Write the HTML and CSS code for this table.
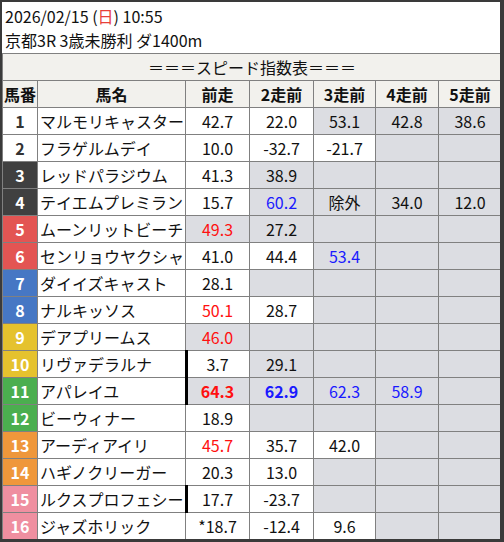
FILE: index.html
```html
<!DOCTYPE html>
<html lang="ja">
<head>
<meta charset="utf-8">
<link rel="stylesheet" href="styles.css">
</head>
<body>
<div class="frame">
  <div class="info">
    <div>2026/02/15 (<span class="sun">日</span>) 10:55</div>
    <div>京都3R 3歳未勝利 ダ1400m</div>
  </div>
  <div class="grid">
    <div class="title">＝＝＝スピード指数表＝＝＝</div>
    <div class="h">馬番</div><div class="h">馬名</div><div class="h">前走</div><div class="h">2走前</div><div class="h">3走前</div><div class="h">4走前</div><div class="h">5走前</div>

    <div class="num w1">1</div><div class="name">マルモリキャスター</div><div class="v">42.7</div><div class="v">22.0</div><div class="v g">53.1</div><div class="v g">42.8</div><div class="v g">38.6</div>
    <div class="num w1">2</div><div class="name">フラゲルムデイ</div><div class="v">10.0</div><div class="v">-32.7</div><div class="v">-21.7</div><div class="v g"></div><div class="v g"></div>
    <div class="num w2">3</div><div class="name">レッドパラジウム</div><div class="v">41.3</div><div class="v g">38.9</div><div class="v g"></div><div class="v g"></div><div class="v g"></div>
    <div class="num w2">4</div><div class="name">テイエムプレミラン</div><div class="v">15.7</div><div class="v g b">60.2</div><div class="v g">除外</div><div class="v g">34.0</div><div class="v g">12.0</div>
    <div class="num w3">5</div><div class="name">ムーンリットビーチ</div><div class="v g r">49.3</div><div class="v g">27.2</div><div class="v g"></div><div class="v g"></div><div class="v g"></div>
    <div class="num w3">6</div><div class="name">センリョウヤクシャ</div><div class="v">41.0</div><div class="v">44.4</div><div class="v g b">53.4</div><div class="v g"></div><div class="v g"></div>
    <div class="num w4">7</div><div class="name">ダイイズキャスト</div><div class="v">28.1</div><div class="v g"></div><div class="v g"></div><div class="v g"></div><div class="v g"></div>
    <div class="num w4">8</div><div class="name">ナルキッソス</div><div class="v r">50.1</div><div class="v">28.7</div><div class="v g"></div><div class="v g"></div><div class="v g"></div>
    <div class="num w5">9</div><div class="name">デアプリームス</div><div class="v g r">46.0</div><div class="v g"></div><div class="v g"></div><div class="v g"></div><div class="v g"></div>
    <div class="num w5">10</div><div class="name">リヴァデラルナ</div><div class="v mark">3.7</div><div class="v g">29.1</div><div class="v g"></div><div class="v g"></div><div class="v g"></div>
    <div class="num w6">11</div><div class="name">アパレイユ</div><div class="v g r bold mark">64.3</div><div class="v g b bold">62.9</div><div class="v g b">62.3</div><div class="v g b">58.9</div><div class="v g"></div>
    <div class="num w6">12</div><div class="name">ビーウィナー</div><div class="v">18.9</div><div class="v g"></div><div class="v g"></div><div class="v g"></div><div class="v g"></div>
    <div class="num w7">13</div><div class="name">アーディアイリ</div><div class="v r">45.7</div><div class="v">35.7</div><div class="v">42.0</div><div class="v g"></div><div class="v g"></div>
    <div class="num w7">14</div><div class="name">ハギノクリーガー</div><div class="v">20.3</div><div class="v">13.0</div><div class="v g"></div><div class="v g"></div><div class="v g"></div>
    <div class="num w8">15</div><div class="name">ルクスプロフェシー</div><div class="v mark">17.7</div><div class="v">-23.7</div><div class="v g"></div><div class="v g"></div><div class="v g"></div>
    <div class="num w8">16</div><div class="name">ジャズホリック</div><div class="v">*18.7</div><div class="v">-12.4</div><div class="v">9.6</div><div class="v g"></div><div class="v g"></div>
  </div>
</div>
</body>
</html>
```
FILE: styles.css
```css
html, body {
  margin: 0;
  padding: 0;
  background: #ffffff;
}
body {
  font-family: "Noto Sans CJK JP", "Noto Sans", sans-serif;
  font-size: 16px;
  color: #111111;
}
.frame {
  width: 504px;
  height: 542px;
  box-sizing: border-box;
  border-style: solid;
  border-color: #3a3a3a;
  border-width: 2px 4px 3px 2px;
  overflow: hidden;
  background: #ffffff;
}
.info {
  padding: 2px 0 1px 3px;
  line-height: 24px;
  height: 48px;
}
.sun {
  color: #e8403a;
}
.grid {
  display: grid;
  grid-template-columns: 34px 147px 63px 63px 61px 62px 62px;
  grid-auto-rows: 26px;
  gap: 1px;
  padding: 1px;
  background: #808080;
  width: max-content;
}
.grid > div {
  display: flex;
  align-items: center;
  justify-content: center;
  background: #ffffff;
  line-height: 1;
  white-space: nowrap;
  overflow: visible;
}
.grid > .title {
  grid-column: 1 / -1;
  background: #f2f1ed;
}
.grid > .h {
  background: #f2f1ed;
  font-weight: bold;
}
.grid > .name {
  justify-content: flex-start;
  padding-left: 2px;
}
.grid > .num {
  font-weight: bold;
  color: #ffffff;
}
.grid > .w1 { background: #ffffff; color: #333333; }
.grid > .w2 { background: #404040; }
.grid > .w3 { background: #e35553; }
.grid > .w4 { background: #4677c4; }
.grid > .w5 { background: #e5c22e; }
.grid > .w6 { background: #4bae4f; }
.grid > .w7 { background: #ef973b; }
.grid > .w8 { background: #ef8fa0; }
.grid > .g { background: #dcdde2; }
.r { color: #ff1010; }
.b { color: #1a1aff; }
.bold { font-weight: bold; }
.mark { position: relative; }
.mark::before {
  content: "";
  position: absolute;
  left: -1px;
  top: -1px;
  bottom: -1px;
  width: 3px;
  background: #000000;
}
```
